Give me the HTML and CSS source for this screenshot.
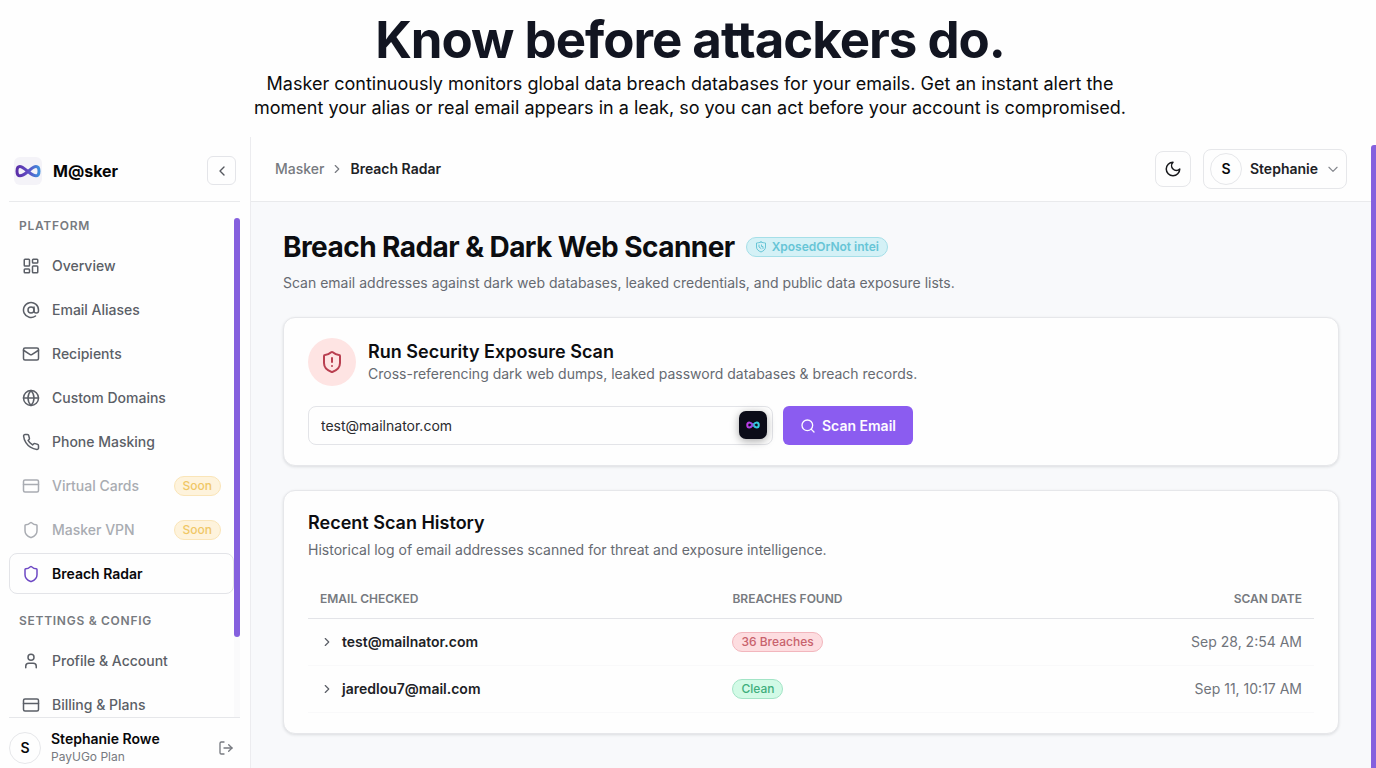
FILE: index.html
```html
<!DOCTYPE html>
<html lang="en">
<head>
<meta charset="utf-8">
<meta name="viewport" content="width=device-width, initial-scale=1">
<title>Breach Radar</title>
<link rel="stylesheet" href="styles.css">
</head>
<body>
<svg class="defs" aria-hidden="true">
  <defs>
    <linearGradient id="brand-grad" x1="0" x2="1"><stop offset="0" stop-color="#5b2fa8"/><stop offset=".5" stop-color="#5f4cc4"/><stop offset="1" stop-color="#3f8fdc"/></linearGradient>
    <linearGradient id="neon-grad" x1="0" x2="1"><stop offset="0" stop-color="#c13be8"/><stop offset=".45" stop-color="#8f4fe0"/><stop offset=".6" stop-color="#2fc4d8"/><stop offset="1" stop-color="#35d0e0"/></linearGradient>
    <symbol id="shield" viewBox="0 0 24 24"><path d="M20 13c0 5-3.500 7.500-7.660 8.950a1 1 0 0 1-.67-.01C7.500 20.500 4 18 4 13V6a1 1 0 0 1 1-1c2 0 4.500-1.200 6.240-2.720a1.170 1.170 0 0 1 1.520 0C14.510 3.810 17 5 19 5a1 1 0 0 1 1 1z"/></symbol>
    <symbol id="card" viewBox="0 0 24 24"><rect x="2" y="4" width="20" height="16" rx="2"/><path d="M2 10h20"/></symbol>
    <symbol id="chevron-right" viewBox="0 0 24 24"><path d="m9 18 6-6-6-6"/></symbol>
  </defs>
</svg>

<div class="page">
  <section class="hero">
    <h1 class="hero-title">Know before attackers do.</h1>
    <p class="hero-text">Masker continuously monitors global data breach databases for your emails. Get an instant alert the moment your alias or real email appears in a leak, so you can act before your account is compromised.</p>
  </section>

  <div class="app">
    <aside class="sidebar">
      <div class="brand-bar">
        <span class="brand-logo"><svg viewBox="0 0 28 16" aria-hidden="true"><path d="M14 8.500C11 6 8.500 3.400 5.800 3.400C3.600 3.400 3 5.500 3 8.200C3 11 3.800 12.800 6 12.800C8.700 12.800 11 11 14 8.500C17 6 19.300 3.400 22 3.400C24.400 3.400 25 5.500 25 8.200C25 11 24.200 12.800 22 12.800C19.300 12.800 17 11 14 8.500Z" fill="none" stroke="url(#brand-grad)" stroke-width="3"/></svg></span>
        <span class="brand-name">M@sker</span>
        <button class="collapse" type="button" aria-label="Collapse sidebar"><svg class="icon icon-sm" viewBox="0 0 24 24"><path d="m15 18-6-6 6-6"/></svg></button>
      </div>

      <div class="nav-scroll">
        <nav class="nav" aria-label="Main">
          <h2 class="nav-heading">PLATFORM</h2>
          <a class="nav-item" href="#overview"><svg class="icon" viewBox="0 0 24 24"><rect x="3" y="3" width="7" height="9" rx="1"/><rect x="14" y="3" width="7" height="5" rx="1"/><rect x="14" y="12" width="7" height="9" rx="1"/><rect x="3" y="16" width="7" height="5" rx="1"/></svg>Overview</a>
          <a class="nav-item" href="#aliases"><svg class="icon" viewBox="0 0 24 24"><circle cx="12" cy="12" r="4"/><path d="M16 8v5a3 3 0 0 0 6 0v-1a10 10 0 1 0-4 8"/></svg>Email Aliases</a>
          <a class="nav-item" href="#recipients"><svg class="icon" viewBox="0 0 24 24"><rect x="2" y="4" width="20" height="16" rx="2"/><path d="m22 7-8.970 5.700a1.940 1.940 0 0 1-2.060 0L2 7"/></svg>Recipients</a>
          <a class="nav-item" href="#domains"><svg class="icon" viewBox="0 0 24 24"><circle cx="12" cy="12" r="10"/><path d="M12 2a14.500 14.500 0 0 0 0 20 14.500 14.500 0 0 0 0-20"/><path d="M2 12h20"/></svg>Custom Domains</a>
          <a class="nav-item" href="#phone"><svg class="icon" viewBox="0 0 24 24"><path d="M22 16.920v3a2 2 0 0 1-2.180 2 19.790 19.790 0 0 1-8.630-3.070 19.500 19.500 0 0 1-6-6 19.790 19.790 0 0 1-3.070-8.670A2 2 0 0 1 4.110 2h3a2 2 0 0 1 2 1.720c.13.960.36 1.900.7 2.810a2 2 0 0 1-.45 2.110L8.090 9.910a16 16 0 0 0 6 6l1.270-1.270a2 2 0 0 1 2.110-.45c.91.34 1.850.57 2.810.7A2 2 0 0 1 22 16.920z"/></svg>Phone Masking</a>
          <a class="nav-item is-soon" href="#cards"><svg class="icon"><use href="#card"/></svg>Virtual Cards<span class="soon">Soon</span></a>
          <a class="nav-item is-soon" href="#vpn"><svg class="icon"><use href="#shield"/></svg>Masker VPN<span class="soon">Soon</span></a>
          <a class="nav-item is-active" href="#radar" aria-current="page"><svg class="icon"><use href="#shield"/></svg>Breach Radar</a>
          <h2 class="nav-heading nav-heading-next">SETTINGS &amp; CONFIG</h2>
          <a class="nav-item" href="#profile"><svg class="icon" viewBox="0 0 24 24"><circle cx="12" cy="7" r="4"/><path d="M19 21v-2a4 4 0 0 0-4-4H9a4 4 0 0 0-4 4v2"/></svg>Profile &amp; Account</a>
          <a class="nav-item" href="#billing"><svg class="icon"><use href="#card"/></svg>Billing &amp; Plans</a>
        </nav>
        <div class="nav-track"><div class="nav-thumb"></div></div>
      </div>

      <div class="account">
        <span class="avatar">S</span>
        <div class="account-text">
          <div class="account-name">Stephanie Rowe</div>
          <div class="account-plan">PayUGo Plan</div>
        </div>
        <button class="logout" type="button" aria-label="Log out"><svg class="icon icon-sm" viewBox="0 0 24 24"><path d="M9 21H5a2 2 0 0 1-2-2V5a2 2 0 0 1 2-2h4"/><path d="m16 17 5-5-5-5"/><path d="M21 12H9"/></svg></button>
      </div>
    </aside>

    <div class="main">
      <header class="topbar">
        <nav class="crumbs" aria-label="Breadcrumb">
          <a href="#masker">Masker</a>
          <svg class="icon icon-xs"><use href="#chevron-right"/></svg>
          <span class="crumb-current">Breach Radar</span>
        </nav>
        <button class="theme" type="button" aria-label="Dark mode"><svg class="icon" viewBox="0 0 24 24"><path d="M12 3a6 6 0 0 0 9 9 9 9 0 1 1-9-9z"/></svg></button>
        <button class="user" type="button"><span class="avatar">S</span>Stephanie<svg class="icon icon-xs" viewBox="0 0 24 24"><path d="m5 9 7 7 7-7"/></svg></button>
      </header>

      <main class="content">
        <div class="title-row">
          <h2 class="title">Breach Radar &amp; Dark Web Scanner</h2>
          <span class="pill pill-intel"><svg class="icon icon-xxs" viewBox="0 0 24 24"><path d="M12 2c3 1.500 6 1.500 9 2v8c0 5-4 8-9 10-5-2-9-5-9-10V4c3-.5 6-.5 9-2z"/><path d="M8 8v4l4 3M13 8v3h3v4"/></svg>XposedOrNot intei</span>
        </div>
        <p class="subtitle">Scan email addresses against dark web databases, leaked credentials, and public data exposure lists.</p>

        <section class="card scan">
          <div class="scan-head">
            <span class="alert-badge"><svg class="icon icon-lg" viewBox="0 0 24 24"><path d="M20 13c0 5-3.500 7.500-7.660 8.950a1 1 0 0 1-.67-.01C7.500 20.500 4 18 4 13V6a1 1 0 0 1 1-1c2 0 4.500-1.200 6.240-2.720a1.170 1.170 0 0 1 1.520 0C14.510 3.810 17 5 19 5a1 1 0 0 1 1 1z"/><path d="M12 8v4"/><path d="M12 16h.01"/></svg></span>
            <div>
              <h3 class="card-title">Run Security Exposure Scan</h3>
              <p class="card-text">Cross-referencing dark web dumps, leaked password databases &amp; breach records.</p>
            </div>
          </div>
          <form class="scan-form">
            <div class="field">
              <input class="email" type="email" value="test@mailnator.com" aria-label="Email address">
              <button class="ext" type="button" aria-label="Masker autofill"><svg viewBox="0 0 28 16" aria-hidden="true"><path d="M14 8C11 4.500 9 3 6.500 3a4 5 0 0 0-4 5c0 3 1.500 5 4 5S11 11.500 14 8s5-5 7.500-5 4 2 4 5-1.500 5-4 5S17 11.500 14 8z" fill="none" stroke="url(#neon-grad)" stroke-width="4"/></svg></button>
            </div>
            <button class="scan-btn" type="button"><svg class="icon icon-sm" viewBox="0 0 24 24"><circle cx="11" cy="11" r="8"/><path d="m21 21-4.300-4.300"/></svg>Scan Email</button>
          </form>
        </section>

        <section class="card history">
          <h3 class="card-title">Recent Scan History</h3>
          <p class="card-text history-text">Historical log of email addresses scanned for threat and exposure intelligence.</p>
          <table class="log">
            <thead>
              <tr><th class="col-email" scope="col">EMAIL CHECKED</th><th scope="col">BREACHES FOUND</th><th class="col-date" scope="col">SCAN DATE</th></tr>
            </thead>
            <tbody>
              <tr>
                <td><div class="log-email"><svg class="icon icon-xs"><use href="#chevron-right"/></svg>test@mailnator.com</div></td>
                <td><span class="pill pill-bad">36 Breaches</span></td>
                <td class="col-date">Sep 28, 2:54 AM</td>
              </tr>
              <tr>
                <td><div class="log-email"><svg class="icon icon-xs"><use href="#chevron-right"/></svg>jaredlou7@mail.com</div></td>
                <td><span class="pill pill-ok">Clean</span></td>
                <td class="col-date">Sep 11, 10:17 AM</td>
              </tr>
            </tbody>
          </table>
        </section>
      </main>
    </div>
    <div class="page-thumb"></div>
  </div>
</div>
</body>
</html>
```
FILE: styles.css
```css
* { box-sizing: border-box; }

body {
  margin: 0;
  background: #fefefe;
  color: #0c0d10;
  font-family: Inter, "Liberation Sans", sans-serif;
  font-size: 14px;
  line-height: 20px;
}

h1, h2, h3, p { margin: 0; }
a { color: inherit; text-decoration: none; }
button, input { font: inherit; color: inherit; }
button { display: flex; align-items: center; justify-content: center; padding: 0; border: 0; background: none; cursor: pointer; }
.defs { position: absolute; width: 0; height: 0; }

.page { display: flex; flex-direction: column; height: 100vh; overflow: hidden; }

.hero { padding: 8px 16px 17px 20px; text-align: center; }
.hero-title { color: #121521; font-size: 51px; line-height: 64px; font-weight: 700; letter-spacing: -0.02em; }
.hero-text { max-width: 880px; margin: 0 auto; color: #0b0b0c; font-size: 18px; line-height: 24px; }

.app { display: flex; flex: 1; min-height: 0; }

.icon { flex: none; width: 18px; height: 18px; fill: none; stroke: currentColor; stroke-width: 2; stroke-linecap: round; stroke-linejoin: round; }
.icon-lg { width: 24px; height: 24px; }
.icon-sm { width: 16px; height: 16px; }
.icon-xs { width: 14px; height: 14px; }
.icon-xxs { width: 12px; height: 12px; }

/* Sidebar */
.sidebar { display: flex; flex: none; flex-direction: column; width: 251px; padding: 0 10px 0 9px; border-right: 1px solid #ececef; }
.brand-bar { display: flex; flex: none; align-items: center; height: 65px; padding: 3px 4px 0 5px; border-bottom: 1px solid #e9eaec; }
.brand-logo { display: flex; align-items: center; width: 28px; height: 28px; border-radius: 6px; background: #f4f3f8; }
.brand-logo svg { width: 28px; height: 16px; }
.brand-name { margin-left: 11px; font-size: 16px; font-weight: 700; color: #050506; }
.collapse { width: 29px; height: 29px; margin-left: auto; border: 1px solid #e4e5e9; border-radius: 6px; color: #55585f; }

.nav-scroll { display: flex; flex: 1; min-height: 0; overflow: hidden; }
.nav { display: flex; flex: 1; flex-direction: column; gap: 3px; padding-top: 14px; }
.nav-heading { padding: 0 10px; margin-bottom: 6px; color: #777a80; font-size: 12px; line-height: 20px; font-weight: 600; letter-spacing: 0.06em; }
.nav-heading-next { margin-top: 14px; }
.nav-item { display: flex; flex: none; align-items: center; gap: 12px; height: 41px; padding: 0 12px; border: 1px solid transparent; border-radius: 8px; color: #5b5f67; font-weight: 500; }
.is-soon { color: #a9acb2; }
.is-active { border-color: #e3e4e8; color: #08080a; font-weight: 600; }
.is-active .icon { color: #6d48c4; }
.soon { margin-left: auto; padding: 0 8px; border: 1px solid #fae5b8; border-radius: 10px; background: #fef3dc; color: #f0c766; font-size: 12px; line-height: 18px; font-weight: 500; }
.nav-track { flex: none; width: 6px; padding-top: 16px; background: linear-gradient(to bottom, transparent 400px, #fafafb 440px); }
.nav-thumb { height: 419px; border-radius: 3px; background: #8560de; }

.account { display: flex; flex: none; align-items: center; height: 51px; padding-top: 10px; border-top: 1px solid #e6e7ea; }
.avatar { display: flex; flex: none; align-items: center; justify-content: center; width: 32px; height: 32px; border: 1px solid #e6e7ea; border-radius: 50%; color: #08080a; font-size: 14px; font-weight: 600; }
.account-text { margin-left: 10px; }
.account-name { color: #08080a; font-size: 14px; line-height: 18px; font-weight: 600; }
.account-plan { color: #777a80; font-size: 12px; line-height: 18px; }
.logout { margin: 0 6px 0 auto; color: #777a80; }

/* Main column */
.main { display: flex; flex: 1; flex-direction: column; min-width: 0; }
.topbar { display: flex; flex: none; align-items: center; height: 65px; padding: 0 24px; border-bottom: 1px solid #e9eaec; }
.crumbs { display: flex; align-items: center; gap: 6px; color: #777a80; font-weight: 500; }
.crumb-current { color: #202125; font-weight: 600; }
.theme { width: 36px; height: 36px; margin-left: auto; border: 1px solid #e6e7ea; border-radius: 8px; color: #17181b; }
.user { gap: 8px; height: 40px; margin-left: 12px; padding: 0 6px; border: 1px solid #e6e7ea; border-radius: 8px; color: #202125; font-weight: 600; }
.user .icon { color: #85888e; }

.content { flex: 1; padding: 28px 32px; background: #f8f9fb; }
.title-row { display: flex; align-items: center; gap: 11px; }
.title { font-size: 28px; line-height: 34px; font-weight: 700; letter-spacing: -0.02em; }
.subtitle { margin: 9px 0 24px; color: #666a71; }

.pill { display: inline-flex; align-items: center; gap: 5px; height: 20px; padding: 0 8px; border: 1px solid; border-radius: 10px; font-size: 12px; line-height: 16px; font-weight: 500; }
.pill-intel { border-color: #a5dfe8; background: #d4f1f6; color: #67c5d6; font-weight: 600; }
.pill-bad { border-color: #f2b6bd; background: #fddde0; color: #c8626c; }
.pill-ok { border-color: #a2e4c6; background: #d2fae6; color: #3fae7c; }

.card { padding: 20px 24px; border: 1px solid #e6e7ea; border-radius: 12px; background: #fefefe; box-shadow: 0 1px 3px rgba(20, 24, 32, 0.12); }
.card-title { font-size: 18px; line-height: 24px; font-weight: 600; }
.card-text { color: #666a71; }

.scan-head { display: flex; align-items: center; gap: 12px; }
.alert-badge { display: flex; align-items: center; justify-content: center; width: 48px; height: 48px; border-radius: 50%; background: #fee4e3; color: #b93f50; }
.scan-form { display: flex; gap: 10px; margin-top: 20px; }
.field { position: relative; width: 465px; }
.email { width: 100%; height: 39px; padding: 0 48px 0 12px; border: 1px solid #e3e4e8; border-radius: 8px; outline: 0; background: #fefefe; color: #2a2b2f; }
.ext { position: absolute; top: 5px; right: 6px; width: 28px; height: 28px; border-radius: 7px; background: #0b0c18; box-shadow: 0 2px 8px rgba(0, 0, 0, 0.35); }
.ext svg { width: 14px; height: 8px; }
.scan-btn { gap: 6px; height: 39px; padding: 0 17px; border-radius: 6px; background: #8b5cf0; color: #fdfbff; font-weight: 600; }

.history { margin-top: 24px; }
.history-text { margin-top: 5px; }
.log { width: 100%; margin-top: 19px; border-collapse: collapse; }
.log th { height: 39px; padding: 2px 12px 0; border-bottom: 1px solid #e3e4e8; color: #777a80; font-size: 12px; font-weight: 600; text-align: left; }
.log td { height: 47px; padding: 0 12px; border-bottom: 1px solid #f9f9fa; color: #70747b; }
.log .col-email { width: 41%; }
.log .col-date { text-align: right; }
.log-email { display: flex; align-items: center; gap: 8px; color: #202125; font-weight: 600; }
.log-email .icon { color: #5b5f67; }

.page-thumb { flex: none; width: 5px; margin-top: 8px; border-radius: 3px 0 0 0; background: #8560de; }
```
